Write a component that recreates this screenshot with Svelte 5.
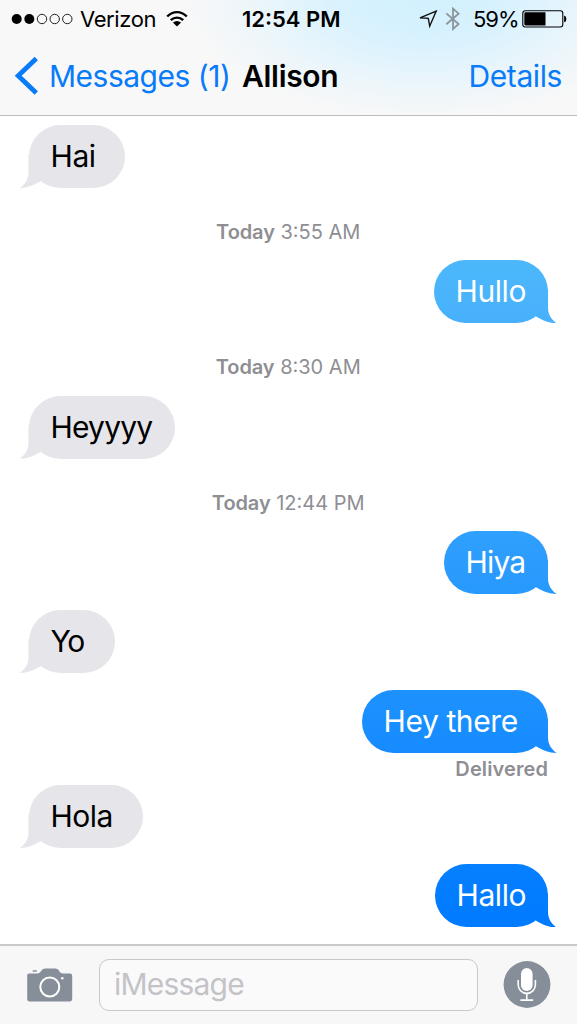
<script>
  const items = [
    { kind: 'in', text: 'Hai', width: 96.5, gap: 9, track: -0.4 },
    { kind: 'time', day: 'Today', time: '3:55 AM' },
    { kind: 'out', text: 'Hullo', width: 114.5, from: '#4cb8fb', to: '#47b0fc', track: -0.4 },
    { kind: 'time', day: 'Today', time: '8:30 AM' },
    { kind: 'in', text: 'Heyyyy', width: 146.5, track: -0.8 },
    { kind: 'time', day: 'Today', time: '12:44 PM' },
    { kind: 'out', text: 'Hiya', width: 104.5, from: '#2fa0fd', to: '#2899fd', track: -0.8 },
    { kind: 'in', text: 'Yo', width: 86, gap: 16, track: -1.2 },
    { kind: 'out', text: 'Hey there', width: 186.5, from: '#1d92fe', to: '#168bff', gap: 17, track: -0.4 },
    { kind: 'status', text: 'Delivered' },
    { kind: 'in', text: 'Hola', width: 114.5, track: -0.5 },
    { kind: 'out', text: 'Hallo', width: 113.5, from: '#0680ff', to: '#007aff', gap: 16.5, track: -0.4 }
  ];
</script>

<div class="screen">
  <header>
    <div class="statusbar">
      <div class="carrier">
        <svg width="62" height="14" viewBox="0 0 62 14">
          <circle cx="5.7" cy="7" r="5" /><circle cx="18.3" cy="7" r="5" />
          <g fill="none" stroke="#222" stroke-width="1">
            <circle cx="31" cy="7" r="4.7" /><circle cx="43.7" cy="7" r="4.7" /><circle cx="56.3" cy="7" r="4.7" />
          </g>
        </svg>
        <span class="network">Verizon</span>
        <svg class="wifi" width="24" height="18" viewBox="0 0 24 18">
          <g fill="none" stroke="#000" stroke-width="2.4">
            <path d="M1.2 6.5C7 .6 15 .6 20.8 6.5" />
            <path d="M4.8 10.2C8.4 6.7 13.6 6.7 17.2 10.2" />
          </g>
          <path d="M6.9 12.5Q11 9.3 15.1 12.5L11 16.4Z" />
        </svg>
      </div>
      <div class="clock">12:54 PM</div>
      <div class="indicators">
        <svg class="location" width="20" height="19" viewBox="0 0 20 19">
          <path d="M2 7.8L18.2 1.1L11.7 16.2L10.3 8.4Z" fill="none" stroke="#111" stroke-width="1.4" />
        </svg>
        <svg class="bluetooth" width="16" height="24" viewBox="0 0 16 24">
          <path d="M1.3 6.4L13.6 17L8 22V1.6L13.6 6.7L1.3 17.3" fill="none" stroke="#8b969c" stroke-width="1.8" />
        </svg>
        <span class="percent">59%</span>
        <svg class="battery" width="46" height="18" viewBox="0 0 46 18">
          <rect x=".8" y=".8" width="40" height="16.2" rx="2.5" fill="none" stroke="#000" stroke-width="1.1" />
          <path d="M3.6 2.3H23.5V15.4H3.6Q2.3 15.4 2.3 14V3.7Q2.3 2.3 3.6 2.3Z" />
          <path d="M42.1 5.8Q44.3 6 44.3 9T42.1 12.2Z" />
        </svg>
      </div>
    </div>
    <nav>
      <svg class="chevron" width="26" height="40" viewBox="0 0 26 40">
        <path d="M24.3 2.5L6.2 19.7L24.3 36.9" fill="none" stroke="#087bf8" stroke-width="4.8" />
      </svg>
      <span class="back">Messages (1)</span>
      <h1>Allison</h1>
      <span class="details">Details</span>
    </nav>
  </header>

  <main>
    {#each items as item}
      {#if item.kind === 'time'}
        <div class="time"><b>{item.day}</b> {item.time}</div>
      {:else if item.kind === 'status'}
        <div class="receipt">{item.text}</div>
      {:else}
        <div
          class="bubble {item.kind}"
          style:width="{item.width}px"
          style:margin-top="{item.gap ?? 0}px"
          style:letter-spacing="{item.track}px"
          style:--from={item.from}
          style:--to={item.to}
        >
          <i class="tail"></i>
          <span>{item.text}</span>
        </div>
      {/if}
    {/each}
  </main>

  <footer>
    <svg class="camera" width="46" height="34" viewBox="0 0 46 34">
      <path
        d="M2 5.5H10.5Q13 5.3 14 3.2Q15.1 .5 18 .5H28.5Q31.2 .5 32.4 3.2Q33.4 5.5 36 5.5H43Q45.2 5.5 45.2 7.7V31Q45.2 33.4 43 33.4H2.3Q.2 33.4 .2 31V7.5Q.2 5.5 2 5.5Z"
        fill="#868e99"
      />
      <rect x="5.5" y="2.2" width="4.5" height="1.6" rx=".7" fill="#868e99" />
      <circle cx="22.8" cy="19" r="9.5" fill="none" stroke="#fff" stroke-width="2" />
      <circle cx="35.3" cy="10.2" r="1.3" fill="#fff" />
    </svg>
    <div class="field">iMessage</div>
    <svg class="mic" width="48" height="48" viewBox="0 0 48 48">
      <circle cx="24" cy="23.5" r="23.4" fill="#868e99" />
      <rect x="18" y="7" width="11.6" height="23" rx="5.8" fill="#fff" />
      <path d="M15.2 19V23.8A8.6 8.6 0 0 0 32.4 23.8V19M23.8 32.5V39M17.4 39.1H30.2" fill="none" stroke="#fff" stroke-width="1.6" />
    </svg>
  </footer>
</div>

<style>
  .screen {
    width: 577px;
    height: 1024px;
    display: flex;
    flex-direction: column;
    overflow: hidden;
    background: #fff;
    font-family: Inter, "Liberation Sans", sans-serif;
    color: #000;
  }
  header {
    box-sizing: border-box;
    height: 116px;
    flex: none;
    border-bottom: 1px solid #b9bbbd;
    background:
      radial-gradient(ellipse 240px 120px at 425px 0, #d2f0fe 0%, #d8f2fe 35%, #e9f5fb 65%, rgba(248, 248, 248, 0) 100%),
      #f8f8f8;
  }
  .statusbar {
    height: 38px;
    display: grid;
    grid-template-columns: 242px 1fr auto;
    align-items: center;
    font-size: 22px;
  }
  .carrier, .indicators { display: flex; align-items: center; }
  .carrier { padding-left: 11px; }
  .network { margin-left: 7px; width: 76px; letter-spacing: -0.4px; }
  .wifi { margin-left: 10px; }
  .clock { font-weight: 600; letter-spacing: 0; white-space: nowrap; }
  .indicators { padding-right: 9px; }
  .location { margin-right: 7px; }
  .bluetooth { margin-right: 12px; }
  .percent { width: 45px; letter-spacing: -1px; }
  .battery { margin-left: 4px; }
  nav {
    height: 76px;
    display: flex;
    align-items: center;
    padding: 0 15px 0 12px;
    font-size: 30px;
    white-space: nowrap;
  }
  .back, .details { color: #087bf8; }
  .chevron { margin-right: 11px; flex: none; }
  .back { width: 193px; letter-spacing: -0.5px; }
  h1 { margin: 0; font-size: 30px; font-weight: 600; letter-spacing: -0.3px; }
  .details { margin-left: auto; letter-spacing: -0.4px; }
  main {
    height: 828px;
    flex: none;
    display: flex;
    flex-direction: column;
    padding: 0 29px 0 28.5px;
  }
  .bubble {
    box-sizing: border-box;
    height: 63px;
    flex: none;
    position: relative;
    border-radius: 31.5px;
    padding-left: 22px;
    font-size: 30px;
    line-height: 62px;
    white-space: nowrap;
  }
  .bubble span { position: relative; }
  .in { --from: #e5e5ea !important; --to: #e5e5ea !important; align-self: flex-start; }
  .out { color: #fff; align-self: flex-end; }
  .bubble, .tail { background: linear-gradient(var(--from), var(--to)) bottom / 100% 63px no-repeat; }
  .tail {
    position: absolute;
    bottom: 0;
    left: -9px;
    width: 40px;
    height: 34px;
    clip-path: path("M9 0V18C9 25 6 30 .3 34C8 34 15 31 21 27.3L38 14V0Z");
  }
  .out .tail { left: auto; right: -9px; transform: scaleX(-1); }
  .time {
    height: 72.3px;
    flex: none;
    box-sizing: border-box;
    padding-top: 32px;
    text-align: center;
    font-size: 20px;
    line-height: 24px;
    color: #8e8e93;
  }
  .time b { font-weight: 600; letter-spacing: -0.1px; }
  .receipt {
    height: 32px;
    flex: none;
    text-align: right;
    font-size: 20px;
    font-weight: 600;
    line-height: 33px;
    letter-spacing: 0.1px;
    color: #8e8e93;
  }
  footer {
    box-sizing: border-box;
    height: 80px;
    flex: none;
    border-top: 2px solid #c9c9cb;
    background: #f7f7f7;
    display: flex;
    align-items: center;
    padding: 0 26px 0 27px;
  }
  .field {
    box-sizing: border-box;
    width: 379px;
    height: 52px;
    margin-left: 26px;
    margin-right: 25px;
    border: 1.5px solid #c8c8cd;
    border-radius: 10px;
    background: #fafafa;
    padding-left: 14px;
    font-size: 30px;
    line-height: 49px;
    letter-spacing: -0.8px;
    color: #c3c3c8;
  }
  .camera, .mic { flex: none; }
</style>
